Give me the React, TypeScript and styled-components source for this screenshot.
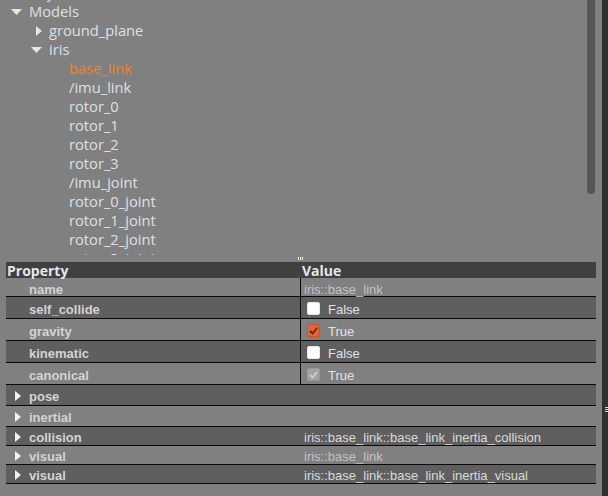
import React from "react";
import styled, { createGlobalStyle } from "styled-components";

const GlobalStyle = createGlobalStyle`
  html, body { margin: 0; padding: 0; background: #808080; overflow: hidden; }
  #root { width: 608px; height: 496px; }
`;

const Shell = styled.div`
  width: 608px;
  height: 496px;
  display: flex;
  background: #808080;
`;

const Main = styled.div`
  flex: 1;
  display: flex;
  flex-direction: column;
  padding-right: 6px;
  min-width: 0;
`;

const SideStrip = styled.div`
  width: 6px;
  background: #303030;
  position: relative;
`;

const StripGrip = styled.div`
  position: absolute;
  left: 3px;
  top: 407px;
  width: 3px;
  height: 6px;
  background: repeating-linear-gradient(
    to bottom,
    #d8d8d8 0px,
    #d8d8d8 1px,
    transparent 1px,
    transparent 2px
  );
`;

const TreePane = styled.div`
  height: 255px;
  display: flex;
  overflow: hidden;
`;

const TreeList = styled.div`
  flex: 1;
  margin-top: -17px;
  font-family: "Open Sans", "Noto Sans", sans-serif;
  font-size: 14.7px;
`;

const TreeRow = styled.div<{ $level: number; $selected?: boolean }>`
  height: 19px;
  line-height: 19px;
  display: flex;
  align-items: center;
  padding-left: ${(p) => 6 + p.$level * 20}px;
  color: ${(p) => (p.$selected ? "#f5811f" : "#dde0e3")};
  white-space: nowrap;
`;

const ArrowCell = styled.span<{ $shift?: number }>`
  width: 20px;
  height: 19px;
  display: flex;
  align-items: center;
  justify-content: center;
  flex-shrink: 0;
  margin-right: 3px;
  padding-left: ${(p) => p.$shift ?? 0}px;
  box-sizing: border-box;
`;

const ScrollTrack = styled.div`
  width: 8px;
  margin-right: 1px;
  display: flex;
  flex-direction: column;
`;

const ScrollThumb = styled.div`
  height: 194px;
  background: #565656;
  border-radius: 0 0 4px 4px;
`;

const Splitter = styled.div`
  height: 7px;
  display: flex;
  justify-content: center;
  padding-top: 2px;
  box-sizing: border-box;
  padding-left: 4px;
`;

const GripMark = styled.span`
  width: 1px;
  height: 3px;
  background: #f0f0f0;
  margin: 0 0.5px;
`;

const Table = styled.div`
  margin-left: 6px;
  width: 590px;
  font-family: "Liberation Sans", Arial, sans-serif;
  font-size: 13px;
`;

const HeaderRow = styled.div`
  height: 16px;
  background: #404040;
  display: grid;
  grid-template-columns: 295px 1fr;
  font-family: "Open Sans", "Noto Sans", sans-serif;
  font-weight: 700;
  font-size: 14px;
  line-height: 15px;
  color: #e3e7ec;
`;

const HeaderCell = styled.div`
  padding-left: 1px;
  padding-top: 1px;
  white-space: nowrap;
`;

const Row = styled.div<{ $h: number; $dark?: boolean; $split?: boolean }>`
  height: ${(p) => p.$h + 1}px;
  box-sizing: border-box;
  background: ${(p) => (p.$dark ? "#5f5f5f" : "#808080")};
  border-bottom: 1px solid #0a0a0a;
  display: grid;
  grid-template-columns: ${(p) => (p.$split ? "294px 1fr" : "295px 1fr")};
  align-items: stretch;
`;

const LabelCell = styled.div<{ $shift: number }>`
  display: flex;
  align-items: center;
  padding-top: ${(p) => p.$shift * 2}px;
  font-weight: 700;
  color: #d3d3d3;
  white-space: nowrap;
`;

const Label = styled.span`
  padding-left: 23px;
`;

const GroupArrow = styled.span`
  width: 23px;
  display: flex;
  justify-content: center;
  padding-left: 1px;
  box-sizing: border-box;
`;

const ValueCell = styled.div<{ $shift: number; $divider?: boolean; $dim?: boolean }>`
  display: flex;
  align-items: center;
  padding-top: ${(p) => p.$shift * 2}px;
  padding-left: 3px;
  border-left: ${(p) => (p.$divider ? "1px solid #0a0a0a" : "none")};
  color: ${(p) => (p.$dim ? "#c2c2c2" : "#dadada")};
  white-space: nowrap;
  overflow: hidden;
`;

const CheckGroup = styled.span`
  display: flex;
  align-items: center;
  padding-left: 3px;
  gap: 8px;
  color: #e2e2e2;
`;

const Box = styled.span<{ $state: "off" | "on" | "disabled" }>`
  width: 13px;
  height: 13px;
  margin-top: -2px;
  border-radius: 2px;
  box-sizing: border-box;
  display: flex;
  align-items: center;
  justify-content: center;
  background: ${(p) =>
    p.$state === "on" ? "#e6633a" : p.$state === "disabled" ? "#a3a3a3" : "#ffffff"};
  border: 1px solid
    ${(p) => (p.$state === "on" ? "#c9532b" : p.$state === "disabled" ? "#999" : "#e8e8e8")};
`;

const DownArrow = () => (
  <svg width="11" height="6" viewBox="0 0 11 6">
    <polygon points="0,0 11,0 5.5,6" fill="#e6e6e6" />
  </svg>
);

const RightArrow = ({ color = "#e6e6e6" }: { color?: string }) => (
  <svg width="6" height="10" viewBox="0 0 6 10">
    <polygon points="0,0 6,5 0,10" fill={color} />
  </svg>
);

const Check = ({ color }: { color: string }) => (
  <svg width="9" height="8" viewBox="0 0 9 8">
    <polyline points="1,4 3.5,6.5 8,1" fill="none" stroke={color} strokeWidth="1.8" />
  </svg>
);

const CheckBox = ({ state }: { state: "off" | "on" | "disabled" }) => (
  <Box $state={state}>
    {state === "on" && <Check color="#5a2a18" />}
    {state === "disabled" && <Check color="#cfcfcf" />}
  </Box>
);

type TreeItem = { label: string; level: number; arrow?: "down" | "right"; selected?: boolean };

const treeItems: TreeItem[] = [
  { label: "Physics", level: 0 },
  { label: "Models", level: 0, arrow: "down" },
  { label: "ground_plane", level: 1, arrow: "right" },
  { label: "iris", level: 1, arrow: "down" },
  { label: "base_link", level: 2, selected: true },
  { label: "/imu_link", level: 2 },
  { label: "rotor_0", level: 2 },
  { label: "rotor_1", level: 2 },
  { label: "rotor_2", level: 2 },
  { label: "rotor_3", level: 2 },
  { label: "/imu_joint", level: 2 },
  { label: "rotor_0_joint", level: 2 },
  { label: "rotor_1_joint", level: 2 },
  { label: "rotor_2_joint", level: 2 },
  { label: "rotor_3_joint", level: 2 },
];

type BoolProp = { label: string; value: string; state: "off" | "on" | "disabled"; dark: boolean };

const boolProps: BoolProp[] = [
  { label: "self_collide", value: "False", state: "off", dark: true },
  { label: "gravity", value: "True", state: "on", dark: false },
  { label: "kinematic", value: "False", state: "off", dark: true },
  { label: "canonical", value: "True", state: "disabled", dark: false },
];

type Group = { label: string; value?: string; h: number; dark: boolean };

const groups: Group[] = [
  { label: "pose", h: 20, dark: true },
  { label: "inertial", h: 20, dark: false },
  { label: "collision", value: "iris::base_link::base_link_inertia_collision", h: 18, dark: true },
  { label: "visual", value: "iris::base_link", h: 18, dark: false },
  { label: "visual", value: "iris::base_link::base_link_inertia_visual", h: 18, dark: true },
];

export default function App() {
  return (
    <>
      <GlobalStyle />
      <Shell>
        <Main>
          <TreePane>
            <TreeList>
              {treeItems.map((it, i) => (
                <TreeRow key={i} $level={it.level} $selected={it.selected}>
                  <ArrowCell $shift={it.arrow === "right" ? 5 : 0}>
                    {it.arrow === "down" && <DownArrow />}
                    {it.arrow === "right" && <RightArrow />}
                  </ArrowCell>
                  {it.label}
                </TreeRow>
              ))}
            </TreeList>
            <ScrollTrack>
              <ScrollThumb />
            </ScrollTrack>
          </TreePane>
          <Splitter>
            <GripMark />
            <GripMark />
            <GripMark />
          </Splitter>
          <Table>
            <HeaderRow>
              <HeaderCell>Property</HeaderCell>
              <HeaderCell>Value</HeaderCell>
            </HeaderRow>
            <Row $h={18} $split>
              <LabelCell $shift={2}>
                <Label>name</Label>
              </LabelCell>
              <ValueCell $shift={2} $divider $dim>
                iris::base_link
              </ValueCell>
            </Row>
            {boolProps.map((p) => (
              <Row key={p.label} $h={21} $dark={p.dark} $split>
                <LabelCell $shift={2}>
                  <Label>{p.label}</Label>
                </LabelCell>
                <ValueCell $shift={2} $divider>
                  <CheckGroup>
                    <CheckBox state={p.state} />
                    {p.value}
                  </CheckGroup>
                </ValueCell>
              </Row>
            ))}
            {groups.map((g, i) => (
              <Row key={i} $h={g.h} $dark={g.dark}>
                <LabelCell $shift={1}>
                  <GroupArrow>
                    <RightArrow color="#f2f2f2" />
                  </GroupArrow>
                  {g.label}
                </LabelCell>
                <ValueCell $shift={1} $dim={!g.dark}>
                  {g.value ?? ""}
                </ValueCell>
              </Row>
            ))}
          </Table>
        </Main>
        <SideStrip>
          <StripGrip />
        </SideStrip>
      </Shell>
    </>
  );
}
